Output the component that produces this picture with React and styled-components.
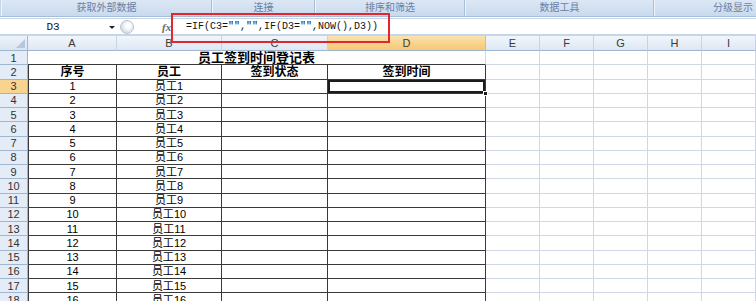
import React from "react";
import styled, { createGlobalStyle } from "styled-components";

const GlobalStyle = createGlobalStyle`
  html, body {
    margin: 0;
    padding: 0;
    background: #ffffff;
    overflow: hidden;
  }
  * { box-sizing: border-box; }
`;

const COLS = ["A", "B", "C", "D", "E", "F", "G", "H", "I"];
const WIDTHS = [89, 105, 106, 158, 54, 54, 54, 54, 54];
const GROUPS = [
  { label: "获取外部数据", width: 211 },
  { label: "连接", width: 103 },
  { label: "排序和筛选", width: 150 },
  { label: "数据工具", width: 189 },
  { label: "分级显示", width: 140, cut: true },
];

const rows = Array.from({ length: 16 }, (_, i) => i + 1);

const App = () => {
  return (
    <Screen>
      <GlobalStyle />
      <Ribbon>
        {GROUPS.map((g) => (
          <Group key={g.label} $w={g.width} $cut={g.cut}>
            {g.label}
          </Group>
        ))}
      </Ribbon>

      <FormulaBar>
        <NameBox>
          <NameText>D3</NameText>
          <Arrow />
        </NameBox>
        <Expander>
          <Knob />
        </Expander>
        <Fx>fx</Fx>
        <FormulaText>=IF(C3="","",IF(D3="",NOW(),D3))</FormulaText>
      </FormulaBar>

      <Sheet>
        <Corner>
          <CornerMark />
        </Corner>
        {COLS.map((c) => (
          <ColHead key={c} $active={c === "D"}>
            {c}
          </ColHead>
        ))}

        <RowHead>1</RowHead>
        <Title>员工签到时间登记表</Title>
        {COLS.slice(4).map((c) => (
          <Cell key={"1" + c} />
        ))}

        <RowHead>2</RowHead>
        <Cell $table $first $bold>序号</Cell>
        <Cell $table $bold>员工</Cell>
        <Cell $table $bold>签到状态</Cell>
        <Cell $table $bold>签到时间</Cell>
        {COLS.slice(4).map((c) => (
          <Cell key={"2" + c} />
        ))}

        {rows.map((n) => (
          <React.Fragment key={n}>
            <RowHead $active={n === 1}>{n + 2}</RowHead>
            <Cell $table $first>{n}</Cell>
            <Cell $table>员工{n}</Cell>
            <Cell $table />
            <Cell $table $selected={n === 1}>
              {n === 1 && <FillHandle />}
            </Cell>
            {COLS.slice(4).map((c) => (
              <Cell key={n + c} />
            ))}
          </React.Fragment>
        ))}
      </Sheet>

      <Callout />
    </Screen>
  );
};

export default App;

const Screen = styled.div`
  position: relative;
  width: 756px;
  height: 301px;
  overflow: hidden;
  background: #ffffff;
  font-family: "Liberation Sans", "Noto Sans CJK SC", sans-serif;
`;

const Ribbon = styled.div`
  display: flex;
  height: 17px;
  background: #c6d7ec;
  border-bottom: 1px solid #a7bcd6;
  padding-left: 1px;
`;

const Group = styled.div`
  flex: 0 0 ${(p) => p.$w}px;
  display: flex;
  align-items: center;
  justify-content: center;
  height: 100%;
  background: linear-gradient(#dce7f4, #c9daee);
  border-left: 1px solid #eef4fb;
  border-right: 1px solid #a9bfd8;
  font-family: "Liberation Sans", "Noto Sans CJK SC", sans-serif;
  font-size: 10px;
  line-height: 12px;
  color: #6a80a3;
  white-space: nowrap;
  ${(p) => p.$cut && "justify-content: flex-start; padding-left: 58px; margin-right: -40px;"}
`;

const FormulaBar = styled.div`
  display: flex;
  height: 18px;
  margin-top: 1px;
  background: #ffffff;
  border-top: 1px solid #c4d3e6;
  border-bottom: 2px solid #c5d5ea;
`;

const NameBox = styled.div`
  position: relative;
  flex: 0 0 118px;
  display: flex;
  align-items: center;
  justify-content: center;
  padding-right: 12px;
`;

const NameText = styled.span`
  font-family: "Liberation Mono", monospace;
  font-size: 11px;
  color: #111;
`;

const Arrow = styled.span`
  position: absolute;
  right: 3px;
  top: 7px;
  width: 0;
  height: 0;
  border-left: 3px solid transparent;
  border-right: 3px solid transparent;
  border-top: 3px solid #222;
`;

const Expander = styled.div`
  flex: 0 0 44px;
  display: flex;
  align-items: center;
  padding-left: 2px;
`;

const Knob = styled.div`
  width: 14px;
  height: 14px;
  border-radius: 50%;
  background: radial-gradient(circle at 60% 40%, #ffffff 20%, #d6dde6 70%, #b4bfcc);
  border: 1px solid #b7c2cf;
`;

const Fx = styled.div`
  flex: 0 0 14px;
  display: flex;
  align-items: center;
  font-family: "Liberation Serif", serif;
  font-style: italic;
  font-weight: bold;
  font-size: 11px;
  color: #6b6b6b;
`;

const FormulaText = styled.div`
  flex: 1;
  display: flex;
  align-items: center;
  padding-left: 10px;
  font-family: "Liberation Mono", monospace;
  font-size: 10px;
  color: #111;
  white-space: nowrap;
`;

const Sheet = styled.div`
  display: grid;
  grid-template-columns: 28px ${WIDTHS.map((w) => w + "px").join(" ")};
  grid-template-rows: 15px;
  grid-auto-rows: 14.25px;
`;

const headBase = `
  display: flex;
  align-items: center;
  justify-content: center;
  font-size: 11px;
  line-height: 12px;
  color: #3b3b3b;
  border-right: 1px solid #9eb6ce;
  border-bottom: 1px solid #9eb6ce;
`;

const Corner = styled.div`
  ${headBase}
  position: relative;
  background: linear-gradient(#eef3fa, #dae4f1);
`;

const CornerMark = styled.span`
  position: absolute;
  right: 2px;
  bottom: 2px;
  width: 0;
  height: 0;
  border-left: 9px solid transparent;
  border-bottom: 9px solid #b6c6db;
`;

const ColHead = styled.div`
  ${headBase}
  background: ${(p) =>
    p.$active
      ? "linear-gradient(#fbe2b0, #f7c76f)"
      : "linear-gradient(#f2f6fb, #dde7f3)"};
  border-right-color: ${(p) => (p.$active ? "#f2b65b" : "#c5d3e4")};
`;

const RowHead = styled.div`
  ${headBase}
  background: ${(p) => (p.$active ? "#f9d491" : "#e4ecf7")};
  color: #333;
`;

const Title = styled.div`
  grid-column: span 4;
  display: flex;
  align-items: flex-start;
  justify-content: center;
  font-family: "Liberation Sans", "Noto Sans CJK SC", sans-serif;
  font-weight: bold;
  font-size: 13px;
  line-height: 13px;
  color: #000;
  border-bottom: 1px solid #3a3a3a;
  border-right: 1px solid #d0d7e5;
`;

const Cell = styled.div`
  position: relative;
  display: flex;
  align-items: center;
  justify-content: center;
  font-family: "Liberation Sans", "Noto Sans CJK SC", sans-serif;
  font-size: ${(p) => (p.$bold ? "12px" : "11px")};
  font-weight: ${(p) => (p.$bold ? "bold" : "normal")};
  line-height: 12px;
  color: #000;
  white-space: nowrap;
  border-right: 1px solid ${(p) => (p.$table ? "#3a3a3a" : "#d0d7e5")};
  border-bottom: 1px solid ${(p) => (p.$table ? "#3a3a3a" : "#d0d7e5")};
  border-left: ${(p) => (p.$first ? "1px solid #3a3a3a" : "none")};
  box-shadow: ${(p) => (p.$selected ? "inset 0 0 0 2px #1c1c1c" : "none")};
`;

const FillHandle = styled.span`
  position: absolute;
  right: -3px;
  bottom: -3px;
  width: 5px;
  height: 5px;
  background: #1c1c1c;
  border: 1px solid #ffffff;
  z-index: 2;
`;

const Callout = styled.div`
  position: absolute;
  left: 171px;
  top: 13px;
  width: 219px;
  height: 30px;
  border: 2px solid #e3262b;
  pointer-events: none;
`;
